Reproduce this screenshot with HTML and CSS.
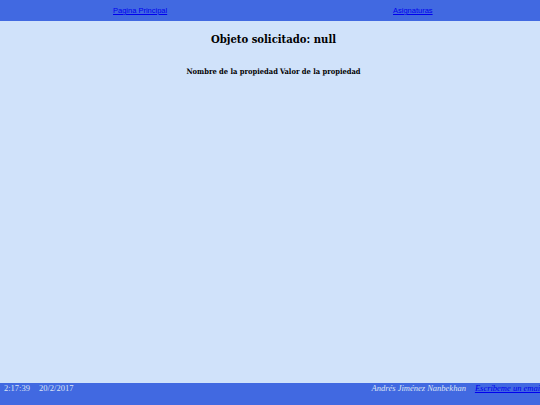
FILE: index.html
```html
<!DOCTYPE html>
<html lang="es">
<head>
<meta charset="utf-8">
<title>Objeto solicitado</title>
<link rel="stylesheet" href="styles.css">
</head>
<body>
<div class="page">
  <nav class="topbar">
    <a class="navlink nav-left" href="#">Pagina Principal</a>
    <a class="navlink nav-right" href="#">Asignaturas</a>
  </nav>
  <main class="content">
    <h1 class="title">Objeto solicitado: null</h1>
    <table class="props">
      <thead>
        <tr><th>Nombre de la propiedad</th><th>Valor de la propiedad</th></tr>
      </thead>
    </table>
  </main>
  <footer class="footer">
    <div class="foot-left"><span class="time">2:17:39</span><span class="date">20/2/2017</span></div>
    <div class="foot-right"><span class="author">Andrés Jiménez Nanbekhan</span><a class="mail" href="#">Escríbeme un email</a></div>
  </footer>
</div>
</body>
</html>
```
FILE: styles.css
```css
html, body {
  margin: 0;
  padding: 0;
  height: 100%;
  overflow: hidden;
}
body {
  background: #d0e2fa;
  font-family: "DejaVu Serif Condensed", "DejaVu Serif", serif;
  font-stretch: condensed;
}
.page {
  display: flex;
  flex-direction: column;
  height: 405px;
  width: 540px;
  overflow: hidden;
}
.topbar {
  background: #4169e1;
  height: 21px;
  display: grid;
  grid-template-columns: 270px 270px;
  align-items: center;
}
.navlink {
  font-family: "Liberation Sans", Arial, sans-serif;
  font-stretch: normal;
  font-size: 7.5px;
  color: #0000ee;
  text-decoration: underline;
  justify-self: start;
}
.nav-left { margin-left: 113px; }
.nav-right { margin-left: 123px; }
.content {
  flex: 1;
  display: flex;
  flex-direction: column;
  align-items: center;
  padding-left: 7px;
}
.title {
  font-size: 11.2px;
  font-weight: bold;
  margin: 11px 0 0 0;
  color: #000;
}
.props {
  margin-top: 20px;
  border-collapse: separate;
  border-spacing: 2px 1px;
  font-size: 7.5px;
}
.props th {
  padding: 0;
  font-weight: bold;
}
.footer {
  background: #4169e1;
  height: 22px;
  display: flex;
  align-items: flex-start;
  font-family: "Liberation Serif", "Times New Roman", serif;
  font-stretch: normal;
  font-size: 8.5px;
  line-height: 10px;
  color: #dde4f4;
  white-space: nowrap;
}
.foot-left {
  margin-left: 4px;
  display: flex;
  gap: 9px;
}
.foot-right {
  margin-left: 298px;
  display: flex;
  gap: 9px;
}
.author { font-style: italic; }
.mail {
  font-style: italic;
  color: #0000ee;
  text-decoration: underline;
}
```
